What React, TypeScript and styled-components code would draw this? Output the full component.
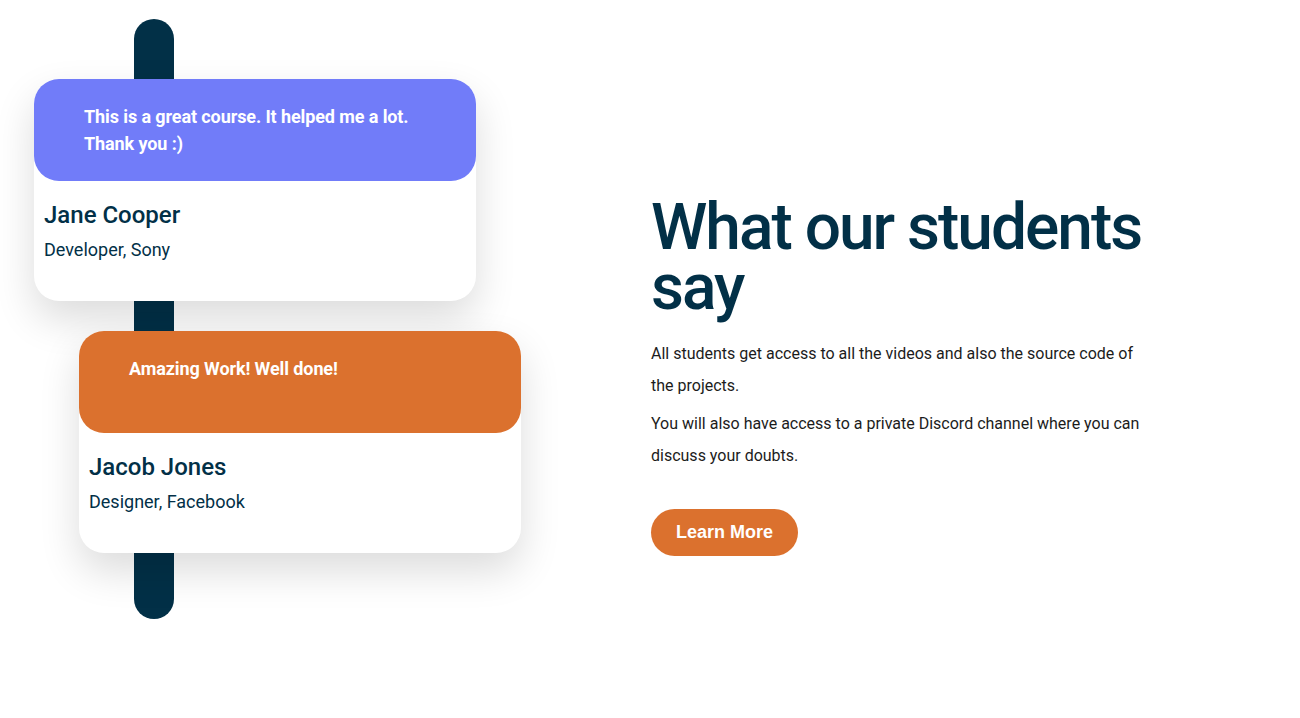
import React from "react";
import styled, { createGlobalStyle } from "styled-components";

const GlobalStyle = createGlobalStyle`
  * {
    box-sizing: border-box;
  }
  body {
    margin: 0;
    background: #ffffff;
    font-family: Roboto, "Noto Sans", Arial, sans-serif;
  }
`;

interface Testimonial {
  quote: string;
  name: string;
  role: string;
  color: string;
}

const testimonials: Testimonial[] = [
  {
    quote: "This is a great course. It helped me a lot. Thank you :)",
    name: "Jane Cooper",
    role: "Developer, Sony",
    color: "#717cf9",
  },
  {
    quote: "Amazing Work! Well done!",
    name: "Jacob Jones",
    role: "Designer, Facebook",
    color: "#db712e",
  },
];

const Section = styled.section`
  display: flex;
  align-items: flex-start;
  gap: 130px;
  padding: 19px 0 0 34px;
  min-height: 718px;
`;

// bar and cards share one grid cell so the cards sit on top of the bar
const Showcase = styled.div`
  display: grid;
  grid-template-areas: "stack";
  width: 487px;
`;

const Bar = styled.div`
  grid-area: stack;
  width: 40px;
  height: 600px;
  margin-left: 100px;
  border-radius: 20px;
  background: #023047;
`;

const CardList = styled.div`
  grid-area: stack;
  display: flex;
  flex-direction: column;
  gap: 30px;
  padding-top: 60px;
`;

const Card = styled.div<{ $offset: number }>`
  width: 442px;
  height: 222px;
  margin-left: ${(p) => p.$offset}px;
  background: #ffffff;
  border-radius: 25px;
  box-shadow: 0 18px 40px rgba(0, 0, 0, 0.14);
  display: flex;
  flex-direction: column;
`;

const Quote = styled.div<{ $bg: string }>`
  height: 102px;
  padding: 24px 50px 0;
  border-radius: 25px;
  background: ${(p) => p.$bg};
  color: #ffffff;
  font-size: 18px;
  font-weight: 700;
  line-height: 27px;
  letter-spacing: -0.1px;
`;

const Person = styled.div`
  padding: 20px 10px 0;
  color: #023047;
`;

const Name = styled.h3`
  margin: 0;
  font-size: 24px;
  font-weight: 500;
  line-height: 28px;
`;

const Role = styled.p`
  margin: 9px 0 0;
  font-size: 18px;
  line-height: 24px;
`;

const Copy = styled.div`
  width: 500px;
  padding-top: 179px;
`;

const Title = styled.h1`
  margin: 0 0 20px;
  font-size: 64px;
  font-weight: 500;
  line-height: 60px;
  letter-spacing: -2px;
  color: #023047;
`;

const Text = styled.p`
  margin: 0 0 6px;
  font-size: 16px;
  line-height: 32px;
  color: #1c1c1c;
`;

const Button = styled.button`
  margin-top: 31px;
  height: 47px;
  padding: 0 25px;
  border: none;
  border-radius: 24px;
  background: #db712e;
  color: #ffffff;
  font-family: "Liberation Sans", Arial, sans-serif;
  font-size: 18px;
  font-weight: 700;
  cursor: pointer;
`;

export default function App() {
  return (
    <>
      <GlobalStyle />
      <Section>
        <Showcase>
          <Bar />
          <CardList>
            {testimonials.map((t, i) => (
              <Card key={t.name} $offset={i * 45}>
                <Quote $bg={t.color}>{t.quote}</Quote>
                <Person>
                  <Name>{t.name}</Name>
                  <Role>{t.role}</Role>
                </Person>
              </Card>
            ))}
          </CardList>
        </Showcase>
        <Copy>
          <Title>What our students say</Title>
          <Text>
            All students get access to all the videos and also the source code
            of the projects.
          </Text>
          <Text>
            You will also have access to a private Discord channel where you
            can discuss your doubts.
          </Text>
          <Button>Learn More</Button>
        </Copy>
      </Section>
    </>
  );
}
